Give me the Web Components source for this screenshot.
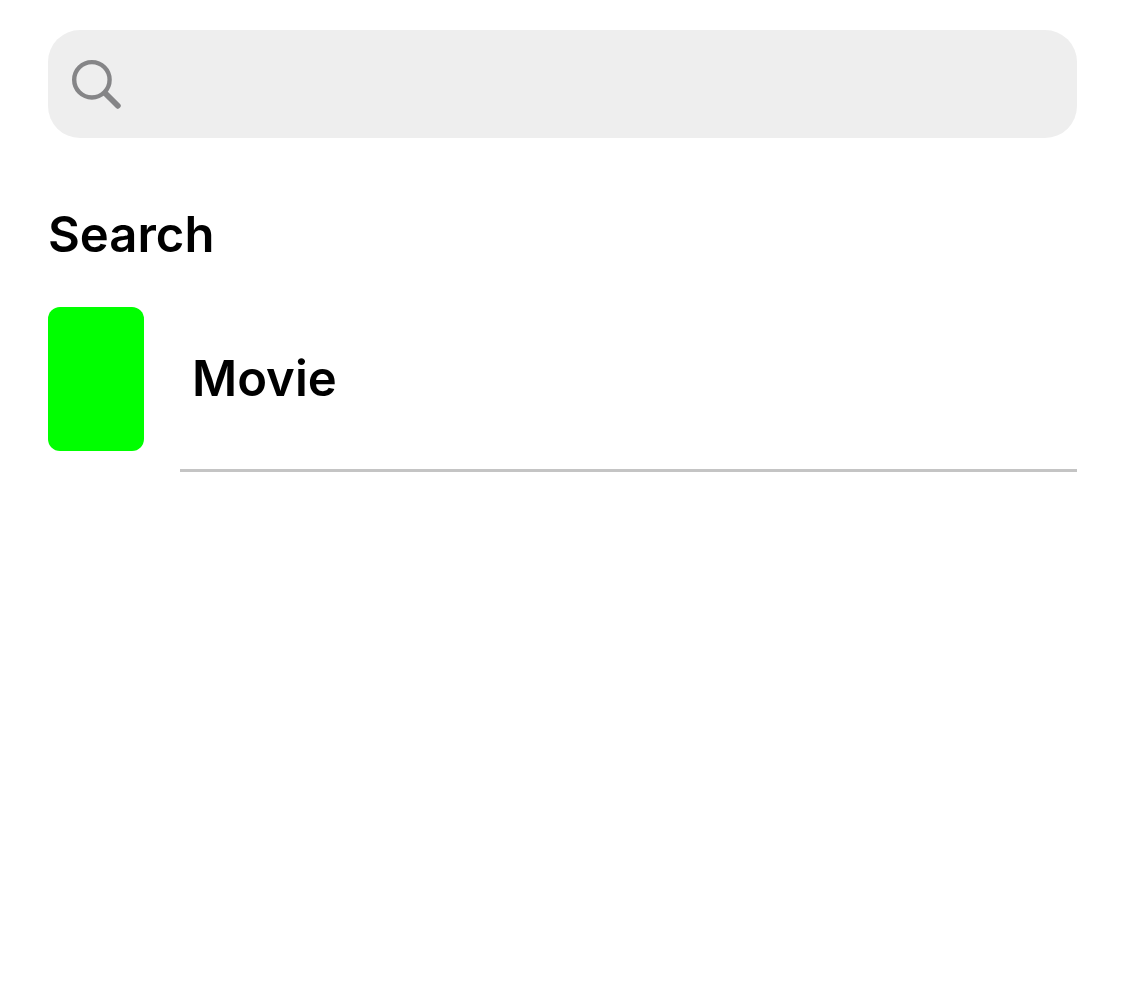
<!DOCTYPE html>
<html lang="en">
<head>
<meta charset="utf-8">
<meta name="viewport" content="width=device-width, initial-scale=1">
<title>Search</title>
<style>
body { margin: 0; background: #fff; color: #000; font-family: Inter, "Liberation Sans", sans-serif; }
</style>
</head>
<body>
<search-page>
  <search-field slot="field" label="Search movies"></search-field>
  <result-section>
    <span slot="title">Search</span>
    <result-row>Movie</result-row>
  </result-section>
</search-page>
<script>
class SearchPage extends HTMLElement {
  constructor() {
    super();
    this.attachShadow({ mode: "open" }).innerHTML = `
      <style>
        :host { display: block; }
        main { display: flex; flex-direction: column; gap: 67px; padding: 30px 48px; }
      </style>
      <main><slot name="field"></slot><slot></slot></main>`;
  }
}
class SearchField extends HTMLElement {
  constructor() {
    super();
    this.attachShadow({ mode: "open" }).innerHTML = `
      <style>
        :host { display: block; }
        label { display: flex; align-items: center; gap: 24px; box-sizing: border-box; height: 108px; padding: 0 24px; border-radius: 32px; background: #eee; }
        svg { flex: none; display: block; }
        input { flex: 1; min-width: 0; padding: 0; border: 0; outline: 0; background: none; color: inherit; font-family: inherit; font-size: 49px; line-height: 60px; }
      </style>
      <label>
        <svg width="50" height="50" viewBox="0 0 50 50" fill="none" stroke="#858587" stroke-linecap="round" aria-hidden="true">
          <circle cx="19.9" cy="20.8" r="17.7" stroke-width="4.4"/>
          <path d="M33.5 34.5 45.8 46.8" stroke-width="5.8"/>
        </svg>
        <input type="search">
      </label>`;
    this.shadowRoot.querySelector("input").setAttribute("aria-label", this.getAttribute("label") || "Search");
  }
}
class ResultSection extends HTMLElement {
  constructor() {
    super();
    this.attachShadow({ mode: "open" }).innerHTML = `
      <style>
        :host { display: block; }
        section { display: flex; flex-direction: column; gap: 42px; }
        h2 { margin: 0; font-size: 49px; line-height: 60px; font-weight: 600; }
      </style>
      <section><h2><slot name="title"></slot></h2><div><slot></slot></div></section>`;
  }
}
class ResultRow extends HTMLElement {
  constructor() {
    super();
    this.attachShadow({ mode: "open" }).innerHTML = `
      <style>
        :host { display: grid; grid-template-columns: 96px 1fr; column-gap: 36px; }
        .poster { height: 144px; border-radius: 12px; background: #0f0; }
        .text { display: flex; align-items: center; padding-left: 12px; font-size: 49px; line-height: 60px; font-weight: 600; }
        .line { grid-column: 2; height: 3px; margin-top: 18px; background: #c4c4c4; }
      </style>
      <div class="poster"></div>
      <div class="text"><slot></slot></div>
      <div class="line"></div>`;
  }
}
customElements.define("search-page", SearchPage);
customElements.define("search-field", SearchField);
customElements.define("result-section", ResultSection);
customElements.define("result-row", ResultRow);
</script>
</body>
</html>
